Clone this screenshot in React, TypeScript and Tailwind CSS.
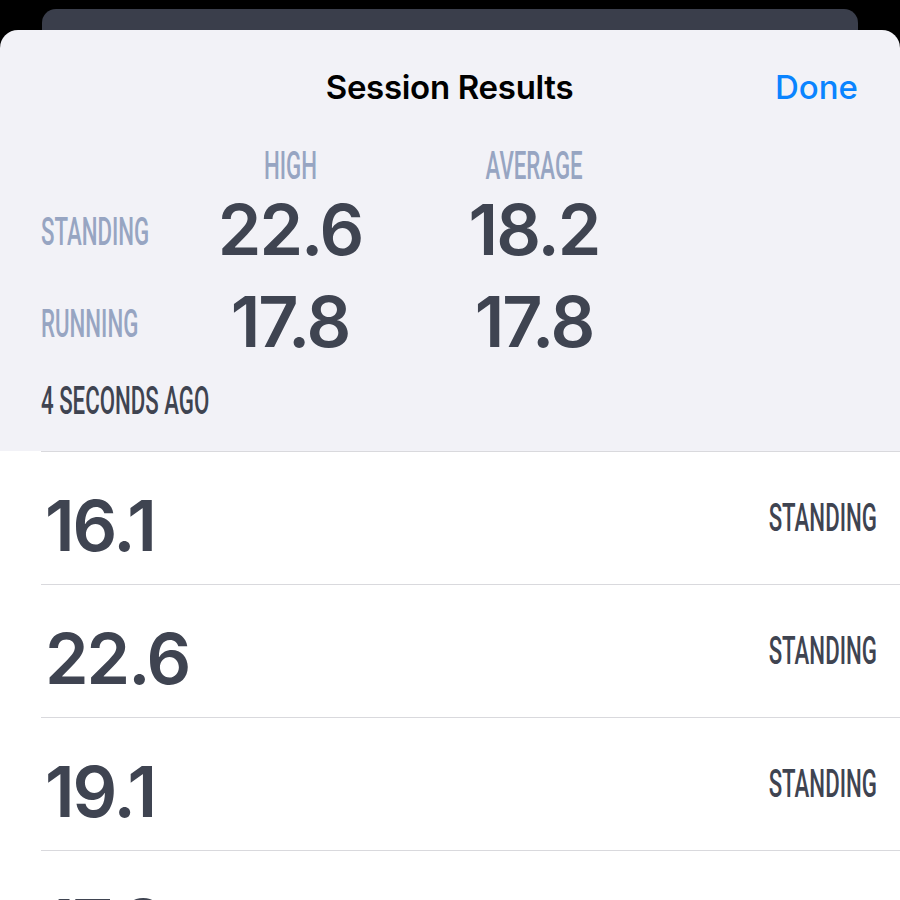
import React from "react";

type Row = { value: string; mode: string };

const rows: Row[] = [
  { value: "16.1", mode: "STANDING" },
  { value: "22.6", mode: "STANDING" },
  { value: "19.1", mode: "STANDING" },
  { value: "17.8", mode: "STANDING" },
];

const num = "font-['Inter','Roboto',sans-serif] font-semibold text-[#3f4451] tracking-[-2px]";
const cond = "inline-block whitespace-nowrap font-['Roboto','Liberation_Sans',sans-serif] font-medium text-[39px] leading-none scale-x-[0.57]";

function Label({ text, className, origin }: { text: string; className: string; origin: string }) {
  return <span className={`${cond} ${origin} ${className}`}>{text}</span>;
}

export default function App() {
  return (
    <div className="h-[900px] w-[900px] overflow-hidden bg-black pt-[9px]">
      <div className="mx-[42px] h-[21px] rounded-t-[14px] bg-[#3a3e4b]" />
      <div className="rounded-t-[18px] bg-[#f2f2f7]">
        <header className="flex h-[118px] items-center justify-between pl-[41px] pr-[42px] pb-[2px]">
          <div className="w-[83px]" />
          <h1 className="font-['Inter','Liberation_Sans',sans-serif] text-[33px] font-semibold tracking-[-0.3px] text-black">
            Session Results
          </h1>
          <button type="button" className="w-[83px] text-right font-['Inter','Liberation_Sans',sans-serif] text-[33px] font-medium text-[#0a84ff]">
            Done
          </button>
        </header>

        <div className="grid grid-cols-[169px_160px_84px_160px] pl-[41px]">
          <div className="h-[36px]" />
          <div className="flex h-[36px] items-center justify-center">
            <Label text="HIGH" origin="origin-center" className="text-[#97a5c2]" />
          </div>
          <div />
          <div className="flex h-[36px] items-center justify-center">
            <Label text="AVERAGE" origin="origin-center" className="text-[#97a5c2]" />
          </div>

          <div className="flex h-[90px] items-center pt-[6px]">
            <Label text="STANDING" origin="origin-left" className="text-[#97a5c2]" />
          </div>
          <div className={`flex h-[90px] items-center justify-center text-[70px] ${num}`}>22.6</div>
          <div />
          <div className={`flex h-[90px] items-center justify-center text-[70px] ${num}`}>18.2</div>

          <div className="flex h-[94px] items-center pt-[6px]">
            <Label text="RUNNING" origin="origin-left" className="text-[#97a5c2]" />
          </div>
          <div className={`flex h-[94px] items-center justify-center text-[70px] ${num}`}>17.8</div>
          <div />
          <div className={`flex h-[94px] items-center justify-center text-[70px] ${num}`}>17.8</div>
        </div>

        <div className="flex h-[83px] items-start pl-[41px] pt-[14px]">
          <Label text="4 SECONDS AGO" origin="origin-left" className="text-[#3f4451]" />
        </div>
      </div>

      <ul className="bg-white pl-[41px]">
        {rows.map((r, i) => (
          <li key={i} className="flex h-[133px] items-center justify-between border-t border-[#d9d9dd] pl-[4px] pr-[23px]">
            <span className={`text-[70px] leading-none pt-[16px] ${num}`}>{r.value}</span>
            <Label text={r.mode} origin="origin-right" className="text-[#3f4451]" />
          </li>
        ))}
      </ul>
    </div>
  );
}
